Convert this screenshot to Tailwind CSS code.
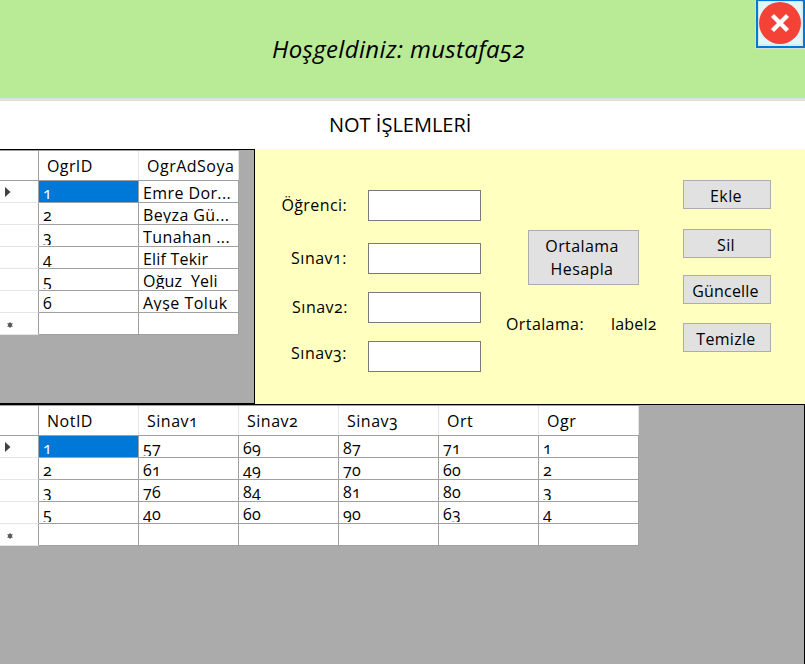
<!DOCTYPE html>
<html lang="tr">
<head>
<meta charset="utf-8">
<title>Not İşlemleri</title>
<script src="https://cdn.jsdelivr.net/npm/@tailwindcss/browser@4"></script>
</head>
<body class="w-[805px] h-[664px] overflow-hidden bg-white text-black text-[16px] font-['Open_Sans','Noto_Sans',sans-serif] [font-variant-numeric:oldstyle-nums] tracking-[0.4px] whitespace-nowrap flex flex-col">

<header class="relative h-[101px] shrink-0 bg-[#b9ea95] border-b-3 border-[#e0e0e0]">
  <h1 class="pl-[272px] pt-[33px] text-[24px] leading-[32px] italic tracking-[0.35px]">Hoşgeldiniz: mustafa52</h1>
  <button class="absolute right-0 top-0 w-[50px] h-[49px] border-l border-b border-[#d5dfd9]">
    <svg class="block" width="49" height="48" viewBox="0 0 49 48">
      <rect x="1" y="1" width="47" height="46" fill="#e0f7fa" stroke="#0078d7" stroke-width="2"/>
      <rect x="2.500" y="1.500" width="43.500" height="43.500" fill="none" stroke="#d3e4e6" stroke-width="1"/>
      <circle cx="24" cy="23" r="21" fill="#f44336"/>
      <path d="M16.500 15.500 31.500 30.500M31.500 15.500 16.500 30.500" stroke="#fff" stroke-width="4.300"/>
    </svg>
  </button>
</header>

<h2 class="h-[48px] shrink-0 pl-[329px] text-[20px] leading-[47px] tracking-[0px]">NOT İŞLEMLERİ</h2>

<main class="flex h-[255px] shrink-0 bg-[#ffffc0]">
  <section class="w-[255px] h-[255px] shrink-0 bg-[#ababab] border-t border-r border-b border-black">
    <div class="w-[239px] border-t border-[#a0a0a0]">
      <div class="flex h-[30px] leading-[31px] bg-white border-b border-[#a0a0a0]">
        <div class="w-[39px] border-r border-[#a0a0a0]"></div>
        <div class="w-[100px] pl-[8px] overflow-hidden border-r border-[#e5e5e5]">OgrID</div>
        <div class="w-[100px] pl-[8px] overflow-hidden border-r border-[#e5e5e5] tracking-[0.5px]">OgrAdSoya</div>
      </div>
      <div class="flex h-[22px] leading-[20px] bg-white">
        <div class="w-[39px] pl-[5px] pt-[6px] border-r border-r-[#a0a0a0] border-b border-b-[#e5e5e5]"><svg class="block" width="6" height="10"><path d="M0 0 5.500 5 0 10z" fill="#404040"/></svg></div>
        <div class="w-[100px] pl-[4px] pt-[2px] pb-px overflow-clip [overflow-clip-margin:content-box] border-r border-b border-[#a0a0a0] bg-[#0078d7] text-white">1</div>
        <div class="w-[100px] pl-[4px] pt-[2px] pb-px overflow-clip [overflow-clip-margin:content-box] border-r border-b border-[#a0a0a0]">Emre Dor...</div>
      </div>
      <div class="flex h-[22px] leading-[20px] bg-white">
        <div class="w-[39px] border-r border-r-[#a0a0a0] border-b border-b-[#e5e5e5]"></div>
        <div class="w-[100px] pl-[4px] pt-[2px] pb-px overflow-clip [overflow-clip-margin:content-box] border-r border-b border-[#a0a0a0]">2</div>
        <div class="w-[100px] pl-[4px] pt-[2px] pb-px overflow-clip [overflow-clip-margin:content-box] border-r border-b border-[#a0a0a0]">Beyza Gü...</div>
      </div>
      <div class="flex h-[22px] leading-[20px] bg-white">
        <div class="w-[39px] border-r border-r-[#a0a0a0] border-b border-b-[#e5e5e5]"></div>
        <div class="w-[100px] pl-[4px] pt-[2px] pb-px overflow-clip [overflow-clip-margin:content-box] border-r border-b border-[#a0a0a0]">3</div>
        <div class="w-[100px] pl-[4px] pt-[2px] pb-px overflow-clip [overflow-clip-margin:content-box] border-r border-b border-[#a0a0a0]">Tunahan ...</div>
      </div>
      <div class="flex h-[22px] leading-[20px] bg-white">
        <div class="w-[39px] border-r border-r-[#a0a0a0] border-b border-b-[#e5e5e5]"></div>
        <div class="w-[100px] pl-[4px] pt-[2px] pb-px overflow-clip [overflow-clip-margin:content-box] border-r border-b border-[#a0a0a0]">4</div>
        <div class="w-[100px] pl-[4px] pt-[2px] pb-px overflow-clip [overflow-clip-margin:content-box] border-r border-b border-[#a0a0a0] tracking-[0.2px]">Elif Tekir</div>
      </div>
      <div class="flex h-[22px] leading-[20px] bg-white">
        <div class="w-[39px] border-r border-r-[#a0a0a0] border-b border-b-[#e5e5e5]"></div>
        <div class="w-[100px] pl-[4px] pt-[2px] pb-px overflow-clip [overflow-clip-margin:content-box] border-r border-b border-[#a0a0a0]">5</div>
        <div class="w-[100px] pl-[4px] pt-[2px] pb-px overflow-clip [overflow-clip-margin:content-box] border-r border-b border-[#a0a0a0] whitespace-pre tracking-[0.2px]">Oğuz  Yeli</div>
      </div>
      <div class="flex h-[22px] leading-[20px] bg-white">
        <div class="w-[39px] border-r border-r-[#a0a0a0] border-b border-b-[#e5e5e5]"></div>
        <div class="w-[100px] pl-[4px] pt-[2px] pb-px overflow-clip [overflow-clip-margin:content-box] border-r border-b border-[#a0a0a0]">6</div>
        <div class="w-[100px] pl-[4px] pt-[2px] pb-px overflow-clip [overflow-clip-margin:content-box] border-r border-b border-[#a0a0a0] tracking-[0.5px]">Ayşe Toluk</div>
      </div>
      <div class="flex h-[22px] bg-white">
        <div class="w-[39px] pl-[7px] pt-[9px] border-r border-r-[#a0a0a0] border-b border-b-[#e5e5e5]"><svg class="block" width="6" height="6"><circle cx="3" cy="3" r="2.200" fill="#505050"/><path d="M3 0v6M.3 1.500l5.400 3M5.700 1.500l-5.400 3" stroke="#606060" stroke-width=".8"/></svg></div>
        <div class="w-[100px] border-r border-b border-[#a0a0a0]"></div>
        <div class="w-[100px] border-r border-b border-[#a0a0a0]"></div>
      </div>
    </div>
  </section>

  <form class="flex items-start">
    <div class="pt-[41px] w-[226px] flex flex-col items-end leading-[31px]">
      <label class="flex gap-[21px] mb-[22px]"><span>Öğrenci:</span><input class="w-[113px] h-[31px] bg-white border border-[#7a7a7a]"></label>
      <label class="flex gap-[21px] mb-[18px]"><span class="tracking-[0.5px]">Sınav1:</span><input class="w-[113px] h-[31px] bg-white border border-[#7a7a7a]"></label>
      <label class="flex gap-[20px] mb-[18px]"><span class="tracking-[0.5px]">Sınav2:</span><input class="w-[113px] h-[31px] bg-white border border-[#7a7a7a]"></label>
      <label class="flex gap-[21px]"><span class="-mt-[3px] tracking-[0.5px]">Sınav3:</span><input class="w-[113px] h-[31px] bg-white border border-[#7a7a7a]"></label>
    </div>
    <div class="w-[202px] pt-[81px] pl-[25px]">
      <button type="button" class="block ml-[22px] w-[111px] h-[55px] bg-[#e1e1e1] border border-[#adadad] leading-[23px] pr-[3px]">Ortalama<br>Hesapla</button>
      <div class="flex pt-[27px] leading-[24px]"><span class="w-[105px]">Ortalama:</span><span class="tracking-[0.2px]">label2</span></div>
    </div>
    <div class="pt-[31px] flex flex-col leading-[27px]">
      <button type="button" class="w-[88px] h-[29px] mb-[20px] pt-[2px] pr-[2px] bg-[#e1e1e1] border border-[#adadad]">Ekle</button>
      <button type="button" class="w-[88px] h-[29px] mb-[17px] pt-[2px] pr-[2px] bg-[#e1e1e1] border border-[#adadad]">Sil</button>
      <button type="button" class="w-[88px] h-[29px] mb-[19px] pt-[2px] pr-[3px] bg-[#e1e1e1] border border-[#adadad] tracking-[0.2px]">Güncelle</button>
      <button type="button" class="w-[88px] h-[29px] pt-[2px] pr-[2px] bg-[#e1e1e1] border border-[#adadad] tracking-[0.3px]">Temizle</button>
    </div>
  </form>
</main>

<section class="grow bg-[#ababab] border-t border-r border-black">
  <div class="w-[639px] border-t border-[#a0a0a0]">
    <div class="flex h-[30px] leading-[31px] tracking-[0.5px] bg-white border-b border-[#a0a0a0]">
      <div class="w-[39px] border-r border-[#a0a0a0]"></div>
      <div class="w-[100px] pl-[8px] border-r border-[#e5e5e5]">NotID</div>
      <div class="w-[100px] pl-[8px] border-r border-[#e5e5e5]">Sinav1</div>
      <div class="w-[100px] pl-[8px] border-r border-[#e5e5e5]">Sinav2</div>
      <div class="w-[100px] pl-[8px] border-r border-[#e5e5e5]">Sinav3</div>
      <div class="w-[100px] pl-[8px] border-r border-[#e5e5e5]">Ort</div>
      <div class="w-[100px] pl-[8px] border-r border-[#e5e5e5]">Ogr</div>
    </div>
    <div class="flex h-[22px] leading-[20px] bg-white">
      <div class="w-[39px] pl-[5px] pt-[6px] border-r border-r-[#a0a0a0] border-b border-b-[#e5e5e5]"><svg class="block" width="6" height="10"><path d="M0 0 5.500 5 0 10z" fill="#404040"/></svg></div>
      <div class="w-[100px] pl-[4px] pt-[2px] pb-px overflow-clip [overflow-clip-margin:content-box] border-r border-b border-[#a0a0a0] bg-[#0078d7] text-white">1</div>
      <div class="w-[100px] pl-[4px] pt-[2px] pb-px overflow-clip [overflow-clip-margin:content-box] border-r border-b border-[#a0a0a0]">57</div>
      <div class="w-[100px] pl-[4px] pt-[2px] pb-px overflow-clip [overflow-clip-margin:content-box] border-r border-b border-[#a0a0a0]">69</div>
      <div class="w-[100px] pl-[4px] pt-[2px] pb-px overflow-clip [overflow-clip-margin:content-box] border-r border-b border-[#a0a0a0]">87</div>
      <div class="w-[100px] pl-[4px] pt-[2px] pb-px overflow-clip [overflow-clip-margin:content-box] border-r border-b border-[#a0a0a0]">71</div>
      <div class="w-[100px] pl-[4px] pt-[2px] pb-px overflow-clip [overflow-clip-margin:content-box] border-r border-b border-[#a0a0a0]">1</div>
    </div>
    <div class="flex h-[22px] leading-[20px] bg-white">
      <div class="w-[39px] border-r border-r-[#a0a0a0] border-b border-b-[#e5e5e5]"></div>
      <div class="w-[100px] pl-[4px] pt-[2px] pb-px overflow-clip [overflow-clip-margin:content-box] border-r border-b border-[#a0a0a0]">2</div>
      <div class="w-[100px] pl-[4px] pt-[2px] pb-px overflow-clip [overflow-clip-margin:content-box] border-r border-b border-[#a0a0a0]">61</div>
      <div class="w-[100px] pl-[4px] pt-[2px] pb-px overflow-clip [overflow-clip-margin:content-box] border-r border-b border-[#a0a0a0]">49</div>
      <div class="w-[100px] pl-[4px] pt-[2px] pb-px overflow-clip [overflow-clip-margin:content-box] border-r border-b border-[#a0a0a0]">70</div>
      <div class="w-[100px] pl-[4px] pt-[2px] pb-px overflow-clip [overflow-clip-margin:content-box] border-r border-b border-[#a0a0a0]">60</div>
      <div class="w-[100px] pl-[4px] pt-[2px] pb-px overflow-clip [overflow-clip-margin:content-box] border-r border-b border-[#a0a0a0]">2</div>
    </div>
    <div class="flex h-[22px] leading-[20px] bg-white">
      <div class="w-[39px] border-r border-r-[#a0a0a0] border-b border-b-[#e5e5e5]"></div>
      <div class="w-[100px] pl-[4px] pt-[2px] pb-px overflow-clip [overflow-clip-margin:content-box] border-r border-b border-[#a0a0a0]">3</div>
      <div class="w-[100px] pl-[4px] pt-[2px] pb-px overflow-clip [overflow-clip-margin:content-box] border-r border-b border-[#a0a0a0]">76</div>
      <div class="w-[100px] pl-[4px] pt-[2px] pb-px overflow-clip [overflow-clip-margin:content-box] border-r border-b border-[#a0a0a0]">84</div>
      <div class="w-[100px] pl-[4px] pt-[2px] pb-px overflow-clip [overflow-clip-margin:content-box] border-r border-b border-[#a0a0a0]">81</div>
      <div class="w-[100px] pl-[4px] pt-[2px] pb-px overflow-clip [overflow-clip-margin:content-box] border-r border-b border-[#a0a0a0]">80</div>
      <div class="w-[100px] pl-[4px] pt-[2px] pb-px overflow-clip [overflow-clip-margin:content-box] border-r border-b border-[#a0a0a0]">3</div>
    </div>
    <div class="flex h-[22px] leading-[20px] bg-white">
      <div class="w-[39px] border-r border-r-[#a0a0a0] border-b border-b-[#e5e5e5]"></div>
      <div class="w-[100px] pl-[4px] pt-[2px] pb-px overflow-clip [overflow-clip-margin:content-box] border-r border-b border-[#a0a0a0]">5</div>
      <div class="w-[100px] pl-[4px] pt-[2px] pb-px overflow-clip [overflow-clip-margin:content-box] border-r border-b border-[#a0a0a0]">40</div>
      <div class="w-[100px] pl-[4px] pt-[2px] pb-px overflow-clip [overflow-clip-margin:content-box] border-r border-b border-[#a0a0a0]">60</div>
      <div class="w-[100px] pl-[4px] pt-[2px] pb-px overflow-clip [overflow-clip-margin:content-box] border-r border-b border-[#a0a0a0]">90</div>
      <div class="w-[100px] pl-[4px] pt-[2px] pb-px overflow-clip [overflow-clip-margin:content-box] border-r border-b border-[#a0a0a0]">63</div>
      <div class="w-[100px] pl-[4px] pt-[2px] pb-px overflow-clip [overflow-clip-margin:content-box] border-r border-b border-[#a0a0a0]">4</div>
    </div>
    <div class="flex h-[22px] bg-white">
      <div class="w-[39px] pl-[7px] pt-[9px] border-r border-r-[#a0a0a0] border-b border-b-[#e5e5e5]"><svg class="block" width="6" height="6"><circle cx="3" cy="3" r="2.200" fill="#505050"/><path d="M3 0v6M.3 1.500l5.400 3M5.700 1.500l-5.400 3" stroke="#606060" stroke-width=".8"/></svg></div>
      <div class="w-[100px] border-r border-b border-[#a0a0a0]"></div>
      <div class="w-[100px] border-r border-b border-[#a0a0a0]"></div>
      <div class="w-[100px] border-r border-b border-[#a0a0a0]"></div>
      <div class="w-[100px] border-r border-b border-[#a0a0a0]"></div>
      <div class="w-[100px] border-r border-b border-[#a0a0a0]"></div>
      <div class="w-[100px] border-r border-b border-[#a0a0a0]"></div>
    </div>
  </div>
</section>
</body>
</html>
